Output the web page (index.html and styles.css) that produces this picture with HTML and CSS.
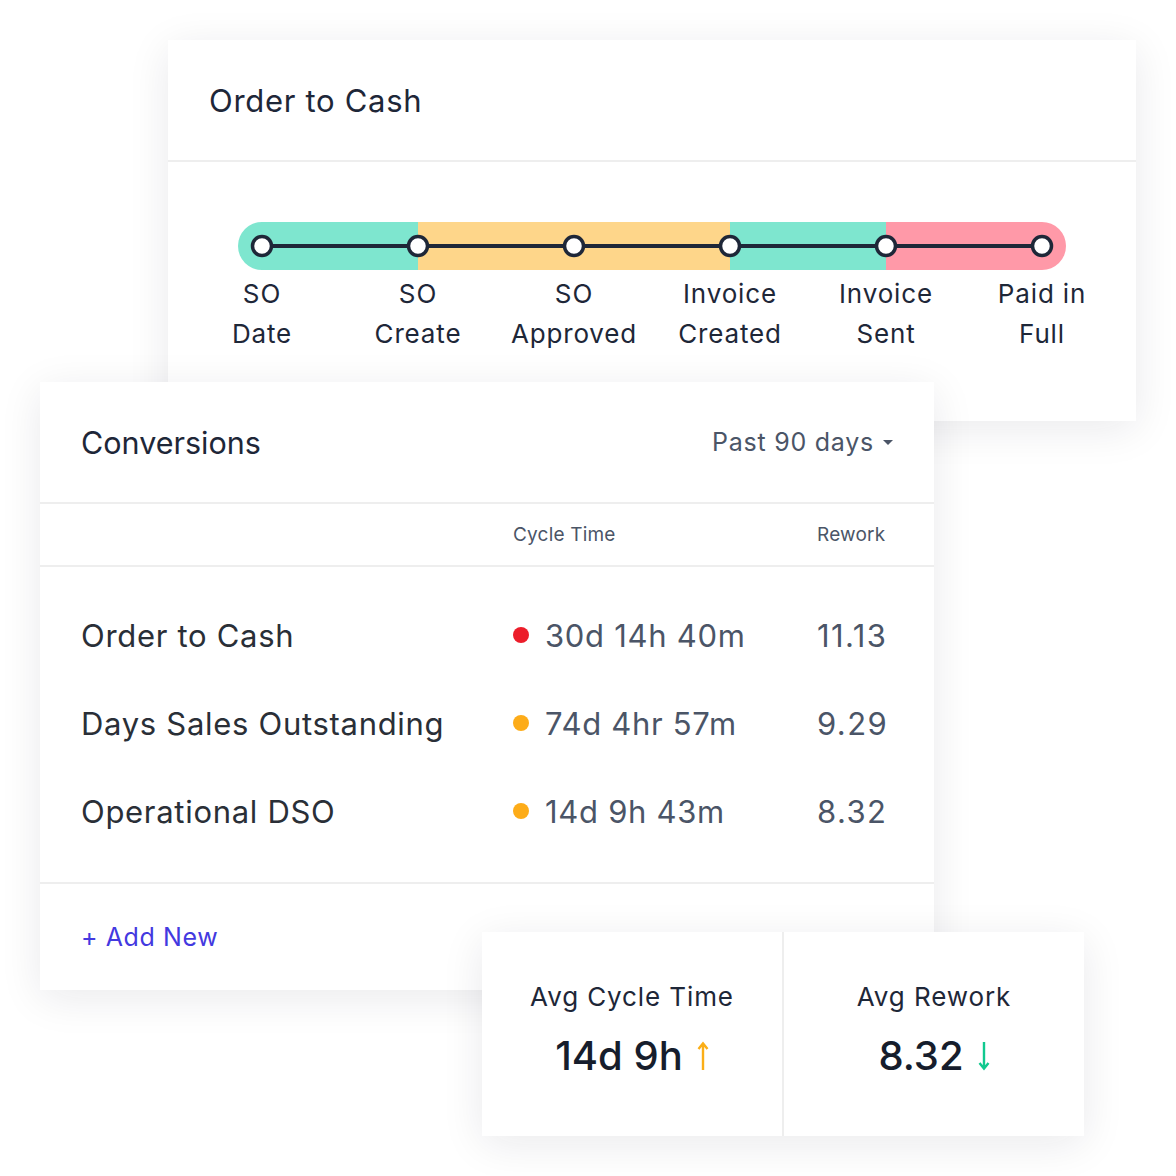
FILE: index.html
```html
<!DOCTYPE html>
<html lang="en">
<head>
    <meta charset="UTF-8">
    <title>Order to Cash</title>
    <link rel="stylesheet" href="styles.css">
</head>
<body>
    <div class="canvas">
        <!-- process card -->
        <div class="card card-process">
            <div class="card-head">
                <h2 class="card-title">Order to Cash</h2>
            </div>
            <div class="process-body">
                <svg class="track" width="828" height="48" viewBox="0 0 828 48">
                    <defs>
                        <clipPath id="pill">
                            <rect x="0" y="0" width="828" height="48" rx="24" ry="24"/>
                        </clipPath>
                    </defs>
                    <g clip-path="url(#pill)">
                        <rect x="0" y="0" width="180" height="48" fill="#7ee6cf"/>
                        <rect x="180" y="0" width="312" height="48" fill="#fed68a"/>
                        <rect x="492" y="0" width="156" height="48" fill="#7ee6cf"/>
                        <rect x="648" y="0" width="180" height="48" fill="#ff99a8"/>
                    </g>
                    <line x1="24" y1="24" x2="804" y2="24" stroke="#1e2738" stroke-width="4"/>
                    <g fill="#fff" stroke="#1e2738" stroke-width="3.5">
                        <circle cx="24" cy="24" r="9.5"/>
                        <circle cx="180" cy="24" r="9.5"/>
                        <circle cx="336" cy="24" r="9.5"/>
                        <circle cx="492" cy="24" r="9.5"/>
                        <circle cx="648" cy="24" r="9.5"/>
                        <circle cx="804" cy="24" r="9.5"/>
                    </g>
                </svg>
                <div class="steps">
                    <div class="step">SO<br>Date</div>
                    <div class="step">SO<br>Create</div>
                    <div class="step">SO<br>Approved</div>
                    <div class="step">Invoice<br>Created</div>
                    <div class="step">Invoice<br>Sent</div>
                    <div class="step">Paid in<br>Full</div>
                </div>
            </div>
        </div>

        <!-- conversions card -->
        <div class="card card-conv">
            <div class="card-head conv-head">
                <h2 class="card-title">Conversions</h2>
                <div class="range">Past 90 days <span class="caret"></span></div>
            </div>
            <div class="conv-grid conv-cols">
                <div></div>
                <div>Cycle Time</div>
                <div>Rework</div>
            </div>
            <div class="conv-rows">
                <div class="conv-grid conv-row">
                    <div class="conv-name">Order to Cash</div>
                    <div class="conv-time"><span class="dot dot-red"></span>30d 14h 40m</div>
                    <div class="conv-rework">11.13</div>
                </div>
                <div class="conv-grid conv-row">
                    <div class="conv-name">Days Sales Outstanding</div>
                    <div class="conv-time"><span class="dot dot-amber"></span>74d 4hr 57m</div>
                    <div class="conv-rework">9.29</div>
                </div>
                <div class="conv-grid conv-row">
                    <div class="conv-name">Operational DSO</div>
                    <div class="conv-time"><span class="dot dot-amber"></span>14d 9h 43m</div>
                    <div class="conv-rework">8.32</div>
                </div>
            </div>
            <div class="conv-foot">
                <a class="add-new" href="#">+ Add New</a>
            </div>
        </div>

        <!-- averages card -->
        <div class="card card-avg">
            <div class="avg-cell">
                <div class="avg-label">Avg Cycle Time</div>
                <div class="avg-value">14d 9h
                    <svg class="arrow" width="12" height="30" viewBox="0 0 12 30">
                        <path d="M6 29V3M1.5 8L6 2.5 10.5 8" fill="none" stroke="#fbae17" stroke-width="2.4"/>
                    </svg>
                </div>
            </div>
            <div class="avg-cell">
                <div class="avg-label">Avg Rework</div>
                <div class="avg-value">8.32
                    <svg class="arrow" width="12" height="30" viewBox="0 0 12 30">
                        <path d="M6 1V27M1.5 22L6 27.5 10.5 22" fill="none" stroke="#10c98f" stroke-width="2.4"/>
                    </svg>
                </div>
            </div>
        </div>
    </div>
</body>
</html>
```

FILE: styles.css
```css
body {
    margin: 0;
    background: #fff;
    font-family: 'Inter', 'Noto Sans', sans-serif;
    letter-spacing: 0.4px;
    color: #1e2738;
}
.canvas {
    position: relative;
    width: 1176px;
    height: 1176px;
}
.card {
    position: absolute;
    background: #fff;
    box-shadow: 0 8px 40px rgba(20, 25, 40, 0.09);
}
.card-process { left: 168px; top: 40px; width: 968px; height: 381px; z-index: 1; }
.card-conv { left: 40px; top: 382px; width: 894px; height: 608px; z-index: 2; display: flex; flex-direction: column; }
.card-avg { left: 482px; top: 932px; width: 602px; height: 204px; z-index: 3; display: flex; }

.card-head {
    height: 120px;
    padding: 0 41px;
    border-bottom: 2px solid #eeeeee;
    display: flex;
    align-items: center;
    flex-shrink: 0;
}
.card-title {
    margin: 0;
    font-size: 31px;
    font-weight: 400;
    letter-spacing: 0.7px;
    color: #1e2738;
}

/* process track */
.process-body {
    padding-top: 60px;
    display: flex;
    flex-direction: column;
    align-items: center;
}
.track { display: block; }
.steps {
    display: flex;
    margin-top: 4px;
}
.step {
    width: 156px;
    text-align: center;
    font-size: 26px;
    line-height: 40px;
    letter-spacing: 0.85px;
    color: #1e2738;
}

/* conversions */
.conv-head { justify-content: space-between; }
.conv-head .card-title { font-size: 30.5px; letter-spacing: 0; }
.range {
    font-size: 25px;
    letter-spacing: 0.75px;
    color: #4b5567;
    display: flex;
    align-items: center;
}
.caret {
    display: inline-block;
    margin-left: 9px;
    border-left: 5px solid transparent;
    border-right: 5px solid transparent;
    border-top: 5px solid #4b5567;
}
.conv-grid {
    display: grid;
    grid-template-columns: 432px 304px 1fr;
    padding-left: 41px;
    align-items: center;
}
.conv-cols {
    height: 61px;
    border-bottom: 2px solid #eeeeee;
    font-size: 19px;
    letter-spacing: 0.2px;
    color: #4b5567;
    flex-shrink: 0;
}
.conv-rows {
    padding: 24px 0 27px;
    border-bottom: 2px solid #eeeeee;
}
.conv-row {
    height: 88px;
    font-size: 31px;
    letter-spacing: 0.7px;
}
.conv-name { color: #2a2f37; }
.conv-time, .conv-rework { color: #4b5567; }
.conv-rework { letter-spacing: 1.4px; }
.conv-time {
    display: flex;
    align-items: center;
}
.dot {
    width: 16px;
    height: 16px;
    border-radius: 50%;
    margin-right: 16px;
}
.dot-red { background: #ec1d2a; }
.dot-amber { background: #fdac19; }
.conv-foot {
    flex: 1;
    padding-left: 41px;
    display: flex;
    align-items: center;
}
.add-new {
    font-size: 25px;
    letter-spacing: 0.6px;
    color: #4339e0;
    text-decoration: none;
}

/* averages */
.avg-cell {
    flex: 1;
    display: flex;
    flex-direction: column;
    align-items: center;
    padding-top: 49px;
}
.avg-cell + .avg-cell { border-left: 2px solid #eeeeee; }
.avg-label {
    font-size: 26px;
    letter-spacing: 0.9px;
    color: #1e2738;
}
.avg-value {
    margin-top: 19px;
    font-size: 40px;
    font-weight: 500;
    letter-spacing: 0;
    color: #161d2c;
    display: flex;
    align-items: center;
    gap: 14px;
}
.arrow { display: block; }
```
